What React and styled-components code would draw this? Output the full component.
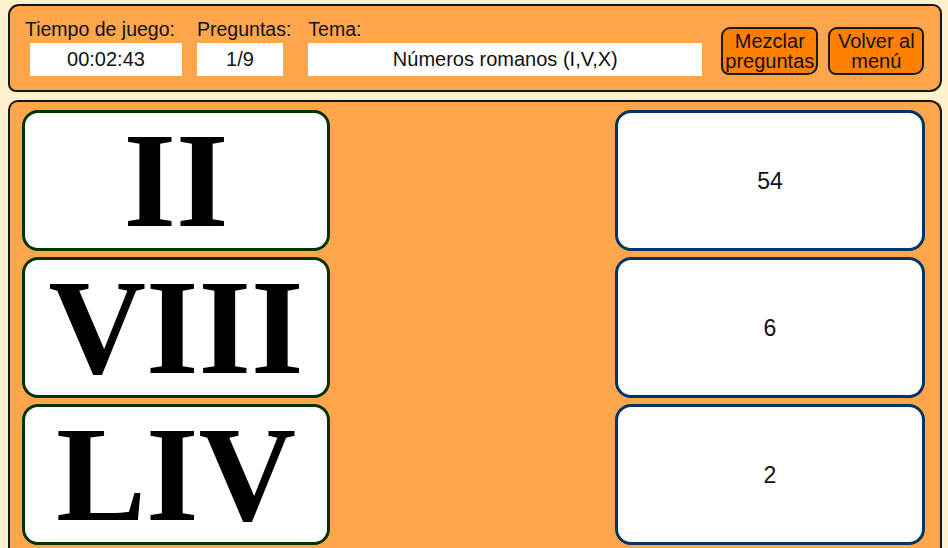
import React from 'react';
import styled, { createGlobalStyle } from 'styled-components';

const GlobalStyle = createGlobalStyle`
  html, body {
    margin: 0;
    padding: 0;
    background: #fff1cb;
    overflow: hidden;
  }
  body {
    font-family: "Liberation Sans", Arial, sans-serif;
  }
`;

const Page = styled.div`
  width: 948px;
  height: 548px;
  box-sizing: border-box;
  padding: 4px 6px 0 8px;
  display: flex;
  flex-direction: column;
  gap: 8px;
  overflow: hidden;
`;

const Header = styled.div`
  height: 88px;
  box-sizing: border-box;
  background: #ffa64d;
  border: 2px solid #151515;
  border-radius: 11px 9px 12px 8px;
  display: flex;
  align-items: flex-start;
  padding: 12px 16px 0 15px;
`;

const Field = styled.div`
  display: flex;
  flex-direction: column;
  margin-right: ${p => p.gap || 0}px;
`;

const Label = styled.div`
  font-size: 19.5px;
  line-height: 23px;
  color: #111;
  white-space: nowrap;
`;

const ValueBox = styled.div`
  margin-top: 2px;
  margin-left: ${p => p.indent || 0}px;
  width: ${p => p.w}px;
  height: 33px;
  background: #fff;
  display: flex;
  align-items: center;
  justify-content: center;
  font-size: 20px;
  color: #111;
`;

const Buttons = styled.div`
  display: flex;
  gap: 10px;
  margin-left: 19px;
  margin-top: 9px;
`;

const Button = styled.button`
  width: ${p => p.w}px;
  height: 48px;
  box-sizing: border-box;
  background: #ff8000;
  border: 2px solid #1a1a1a;
  border-radius: 9px 7px 10px 8px;
  font-family: "Liberation Sans", Arial, sans-serif;
  font-size: 20px;
  line-height: 20px;
  color: #111;
  padding: 0;
  cursor: pointer;
`;

const Board = styled.div`
  flex: 1;
  background: #ffa64d;
  border: 2px solid #151515;
  border-bottom: none;
  border-radius: 10px 12px 0 0;
  padding: 8px 15px 0 12px;
  display: grid;
  grid-template-columns: 308px 1fr 310px;
  grid-auto-rows: 141px;
  row-gap: 6px;
`;

const Card = styled.div`
  grid-column: ${p => (p.side === 'left' ? 1 : 3)};
  grid-row: ${p => p.row};
  box-sizing: border-box;
  background: #fff;
  border: 3px solid ${p => (p.side === 'left' ? '#003300' : '#003366')};
  border-radius: 16px;
  display: flex;
  align-items: center;
  justify-content: center;
`;

const Numeral = styled.span`
  font-family: "Liberation Serif", "Times New Roman", serif;
  font-weight: bold;
  font-size: 135px;
  line-height: 1;
  color: #000;
`;

const Answer = styled.span`
  font-size: 23px;
  color: #111;
  margin-top: 2px;
`;

const roman = ['II', 'VIII', 'LIV'];
const answers = ['54', '6', '2'];

export default function App() {
  return (
    <>
      <GlobalStyle />
      <Page>
        <Header>
          <Field gap={15}>
            <Label>Tiempo de juego:</Label>
            <ValueBox w={152} indent={5}>00:02:43</ValueBox>
          </Field>
          <Field gap={17}>
            <Label>Preguntas:</Label>
            <ValueBox w={86}>1/9</ValueBox>
          </Field>
          <Field>
            <Label>Tema:</Label>
            <ValueBox w={394}>Números romanos (I,V,X)</ValueBox>
          </Field>
          <Buttons>
            <Button w={97}>Mezclar<br />preguntas</Button>
            <Button w={96}>Volver al<br />menú</Button>
          </Buttons>
        </Header>
        <Board>
          {roman.map((r, i) => (
            <Card key={r} side="left" row={i + 1}>
              <Numeral>{r}</Numeral>
            </Card>
          ))}
          {answers.map((a, i) => (
            <Card key={a} side="right" row={i + 1}>
              <Answer>{a}</Answer>
            </Card>
          ))}
        </Board>
      </Page>
    </>
  );
}
